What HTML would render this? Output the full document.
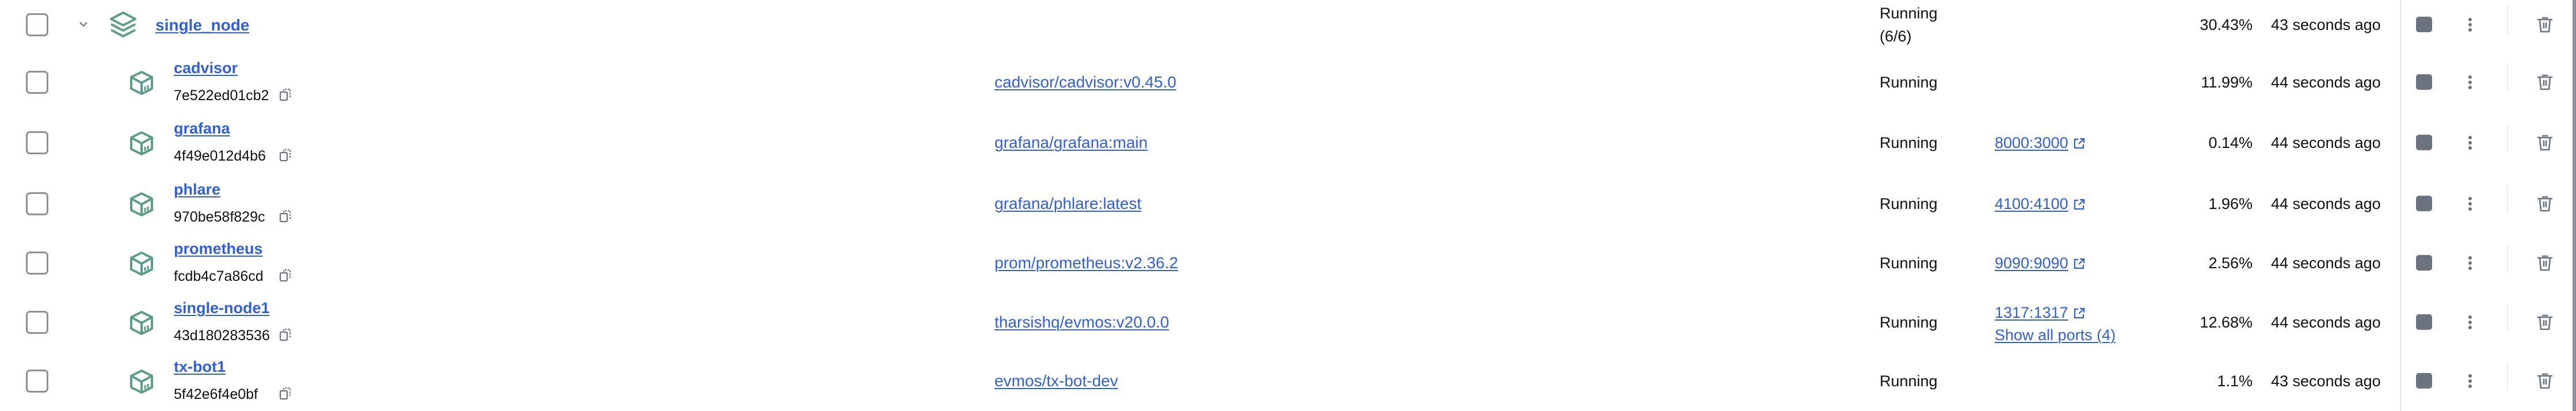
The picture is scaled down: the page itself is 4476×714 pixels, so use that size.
<!DOCTYPE html>
<html><head><meta charset="utf-8">
<style>
*{margin:0;padding:0;box-sizing:border-box}
body{width:4476px;height:714px;background:#fff;position:relative;overflow:hidden;font-family:"Liberation Sans",Arial,sans-serif;color:#111}
.a{position:absolute;white-space:nowrap;line-height:1}
.cb{position:absolute;left:45px;width:39px;height:40px;border:3px solid #8a909c;border-radius:7px}
.lnk{color:#2f5ee0;text-decoration:underline;text-decoration-thickness:2px;text-underline-offset:3px}
.nm{font-weight:bold;font-size:27px}
.h{font-size:25px;color:#111}
.t{font-size:27px}
.img{font-size:28px}
.stop{position:absolute;left:4198px;width:28px;height:27px;background:#6b7280;border-radius:5px}
.dot{position:absolute;left:4289px;width:6px;height:6px;border-radius:50%;background:#6b7280}
.div{position:absolute;left:4356px;width:2px;height:48px;background:#efefef}
</style></head><body>
<div style="position:absolute;left:4170px;top:0;width:2px;height:714px;background:#e2e2e2"></div>
<div style="position:absolute;left:4470px;top:0;width:6px;height:714px;background:#8a8f99"></div>

<div class="cb" style="top:23px"></div>
<svg class="a" style="left:136px;top:35px" width="18" height="14" viewBox="0 0 18 14"><path d="M3 4l6 6 6-6" fill="none" stroke="#6b7280" stroke-width="2.2"/></svg>
<svg class="a" style="left:190px;top:19px" width="48" height="48" viewBox="0 0 48 48"><g fill="none" stroke="#5a9e8a" stroke-width="4" stroke-linejoin="round"><path d="M3 14L24 3 45 14 24 25Z"/><path d="M3 23l21 11 21-11"/><path d="M3 33l21 11 21-11"/></g></svg>
<span class="a nm lnk" style="left:270px;top:30px;font-size:28px">single_node</span>
<span class="a t" style="left:3266px;top:10px">Running</span>
<span class="a t" style="left:3266px;top:50px">(6/6)</span>
<span class="a t" style="left:3700px;width:214px;text-align:right;top:30px">30.43%</span>
<span class="a t" style="left:3946px;top:30px">43 seconds ago</span>

<div id="rows"></div>

<script>
var R=[
["cadvisor","7e522ed01cb2","cadvisor/cadvisor:v0.45.0","","11.99%","44 seconds ago",143],
["grafana","4f49e012d4b6","grafana/grafana:main","8000:3000","0.14%","44 seconds ago",248],
["phlare","970be58f829c","grafana/phlare:latest","4100:4100","1.96%","44 seconds ago",354],
["prometheus","fcdb4c7a86cd","prom/prometheus:v2.36.2","9090:9090","2.56%","44 seconds ago",457],
["single-node1","43d180283536","tharsishq/evmos:v20.0.0","1317:1317","12.68%","44 seconds ago",560],
["tx-bot1","5f42e6f4e0bf","evmos/tx-bot-dev","","1.1%","43 seconds ago",662]
];
var h='';
var cube='<svg width="42" height="44" viewBox="0 0 42 44"><g fill="none" stroke="#5a9e8a" stroke-width="4" stroke-linejoin="round"><path d="M21 3L39 12V32L21 41 3 32V12Z"/><path d="M3 12L21 22 39 12M21 22V41"/></g><path d="M27 28v7M32 26v7" stroke="#5a9e8a" stroke-width="3"/></svg>';
var copy='<svg width="22" height="24" viewBox="0 0 22 24"><rect x="2" y="8" width="12" height="14" rx="2" fill="none" stroke="#6b7280" stroke-width="2.2"/><path d="M8 6V3h11v13h-3" fill="none" stroke="#6b7280" stroke-width="2" stroke-dasharray="3 2"/></svg>';
var ext='<svg width="22" height="22" viewBox="0 0 22 22" style="vertical-align:-3px;margin-left:8px"><path d="M9 4H3v15h15v-6M12 3h7v7M19 3l-9 9" fill="none" stroke="#2f5ee0" stroke-width="2.2"/></svg>';
R.forEach(function(r){
 var c=r[6];
 h+='<div class="cb" style="top:'+(c-20)+'px"></div>';
 h+='<div class="a" style="left:225px;top:'+(c-21)+'px">'+cube+'</div>';
 h+='<span class="a nm lnk" style="left:302px;top:'+(c-38)+'px">'+r[0]+'</span>';
 h+='<span class="a h" style="left:302px;top:'+(c+11)+'px">'+r[1]+'</span>';
 var cw=r[1].length*13.9;
 h+='<div class="a" style="left:'+(302+cw+16)+'px;top:'+(c+9)+'px">'+copy+'</div>';
 h+='<span class="a img lnk" style="left:1728px;top:'+(c-14)+'px">'+r[2]+'</span>';
 h+='<span class="a t" style="left:3266px;top:'+(c-13)+'px">Running</span>';
 if(r[3]){
  if(r[0]=="single-node1"){
   h+='<span class="a t" style="left:3466px;top:'+(c-30)+'px"><span class="lnk">'+r[3]+'</span>'+ext+'</span>';
   h+='<div class="a" style="left:3466px;top:'+(c+9)+'px;width:216px;overflow:hidden;padding-bottom:6px"><span class="t lnk">Show all ports (4)</span></div>';
  } else {
   h+='<span class="a t" style="left:3466px;top:'+(c-13)+'px"><span class="lnk">'+r[3]+'</span>'+ext+'</span>';
  }
 }
 h+='<span class="a t" style="left:3700px;width:214px;text-align:right;top:'+(c-13)+'px">'+r[4]+'</span>';
 h+='<span class="a t" style="left:3946px;top:'+(c-13)+'px">'+r[5]+'</span>';
});
[43,143,248,354,457,560,662].forEach(function(c){
 h+='<div class="stop" style="top:'+(c-14)+'px"></div>';
 h+='<div class="dot" style="top:'+(c-12)+'px"></div><div class="dot" style="top:'+(c-3)+'px"></div><div class="dot" style="top:'+(c+6)+'px"></div>';
 h+='<div class="div" style="top:'+(c-32)+'px"></div>';
 h+='<svg class="a" style="left:4407px;top:'+(c-15)+'px" width="30" height="30" viewBox="0 0 30 30"><g fill="none" stroke="#6b7280" stroke-width="2.6" stroke-linecap="round"><path d="M3 6h24M11 3h8M6 6l2 21h14l2-21M13 12v8M17 12v8"/></g></svg>';
});
document.getElementById('rows').innerHTML=h;
</script>
</body></html>
